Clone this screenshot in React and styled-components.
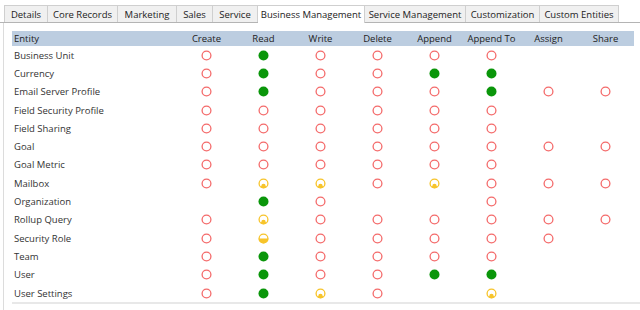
import React from "react";
import styled, { createGlobalStyle } from "styled-components";

const GlobalStyle = createGlobalStyle`
  html, body {
    margin: 0;
    padding: 0;
    background: #ffffff;
    font-family: "Open Sans", "Noto Sans", sans-serif;
  }
`;

const Page = styled.div`
  width: 640px;
  height: 310px;
  padding-top: 5px;
  box-sizing: border-box;
  overflow: hidden;
`;

const TabStrip = styled.div`
  display: flex;
  align-items: flex-start;
  padding-left: 4px;
  border-bottom: 1px solid #b4b4b4;
  height: 17px;
`;

const Tab = styled.div`
  flex: none;
  width: ${props => props.w}px;
  box-sizing: border-box;
  display: flex;
  align-items: center;
  justify-content: center;
  white-space: nowrap;
  font-size: 9.5px;
  color: #222;
  background: ${props => (props.active ? "#ffffff" : "#f0f0f0")};
  border: 1px solid #cfcfcf;
  border-left: ${props => (props.first ? "1px solid #cfcfcf" : "none")};
  border-bottom: none;
  height: ${props => (props.active ? "18px" : "17px")};
`;

const Panel = styled.div`
  margin-left: 3px;
  border-left: 1px solid #dcdcdc;
  padding: 8px 0 0 8px;
  height: 290px;
`;

const Grid = styled.div`
  display: grid;
  grid-template-columns: 166px repeat(8, 57px);
  width: 622px;
`;

const HeaderRow = styled.div`
  display: contents;
`;

const HeadCell = styled.div`
  height: 15px;
  background: #bccde0;
  display: flex;
  align-items: center;
  justify-content: ${props => (props.left ? "flex-start" : "center")};
  padding-left: ${props => (props.left ? "2px" : "0")};
  font-size: 9.5px;
  color: #222;
`;

const Cell = styled.div`
  height: 18.3px;
  display: flex;
  align-items: center;
  justify-content: ${props => (props.left ? "flex-start" : "center")};
  padding-left: ${props => (props.left ? "2px" : "0")};
  font-size: 9.5px;
  color: #333;
`;

const BottomRule = styled.div`
  border-top: 2px solid #e8e8e8;
  width: 640px;
`;

const RED = "#f46a6a";
const GREEN = "#0a960a";
const YELLOW = "#f7c42a";

const Icon = ({ kind }) => {
  if (!kind) return null;
  if (kind === "R")
    return (
      <svg width="11" height="11" viewBox="0 0 11 11">
        <circle cx="5.5" cy="5.5" r="4.4" fill="none" stroke={RED} strokeWidth="1.3" />
      </svg>
    );
  if (kind === "G")
    return (
      <svg width="11" height="11" viewBox="0 0 11 11">
        <circle cx="5.5" cy="5.5" r="5" fill={GREEN} />
      </svg>
    );
  if (kind === "B")
    return (
      <svg width="11" height="11" viewBox="0 0 11 11">
        <circle cx="5.5" cy="5.5" r="4.4" fill="none" stroke={YELLOW} strokeWidth="1.3" />
        <path d="M0.6 5.5 A4.9 4.9 0 0 0 10.4 5.5 Z" fill={YELLOW} />
      </svg>
    );
  return (
    <svg width="11" height="11" viewBox="0 0 11 11">
      <circle cx="5.5" cy="5.5" r="4.4" fill="none" stroke={YELLOW} strokeWidth="1.3" />
      <path d="M2.6 9.2 L3.3 8 A2.2 2.2 0 0 1 7.7 8 L8.4 9.2 A4.9 4.9 0 0 1 2.6 9.2 Z" fill={YELLOW} />
    </svg>
  );
};

const tabs = [
  ["Details", 44],
  ["Core Records", 70],
  ["Marketing", 59],
  ["Sales", 36],
  ["Service", 45],
  ["Business Management", 107],
  ["Service Management", 101],
  ["Customization", 74],
  ["Custom Entities", 79],
];

const columns = ["Create", "Read", "Write", "Delete", "Append", "Append To", "Assign", "Share"];

const rows = [
  ["Business Unit", "R G R R R R - -"],
  ["Currency", "R G R R G G - -"],
  ["Email Server Profile", "R G R R R G R R"],
  ["Field Security Profile", "R R R R R R - -"],
  ["Field Sharing", "R R R R R R - -"],
  ["Goal", "R R R R R R R R"],
  ["Goal Metric", "R R R R R R - -"],
  ["Mailbox", "R U U R U R R R"],
  ["Organization", "- G R - - R - -"],
  ["Rollup Query", "R U R R R R R R"],
  ["Security Role", "R B R R R R R -"],
  ["Team", "R G R R R R - -"],
  ["User", "R G R R G G - -"],
  ["User Settings", "R G U R - U - -"],
];

export default function App() {
  return (
    <Page>
      <GlobalStyle />
      <TabStrip>
        {tabs.map(([name, w], i) => (
          <Tab key={name} w={w} first={i === 0} active={name === "Business Management"}>
            {name}
          </Tab>
        ))}
      </TabStrip>
      <Panel>
        <Grid>
          <HeaderRow>
            <HeadCell left>Entity</HeadCell>
            {columns.map(c => (
              <HeadCell key={c}>{c}</HeadCell>
            ))}
          </HeaderRow>
          {rows.map(([name, marks]) => (
            <React.Fragment key={name}>
              <Cell left>{name}</Cell>
              {marks.split(" ").map((m, i) => (
                <Cell key={i}>
                  <Icon kind={m === "-" ? null : m} />
                </Cell>
              ))}
            </React.Fragment>
          ))}
        </Grid>
        <BottomRule />
      </Panel>
    </Page>
  );
}
